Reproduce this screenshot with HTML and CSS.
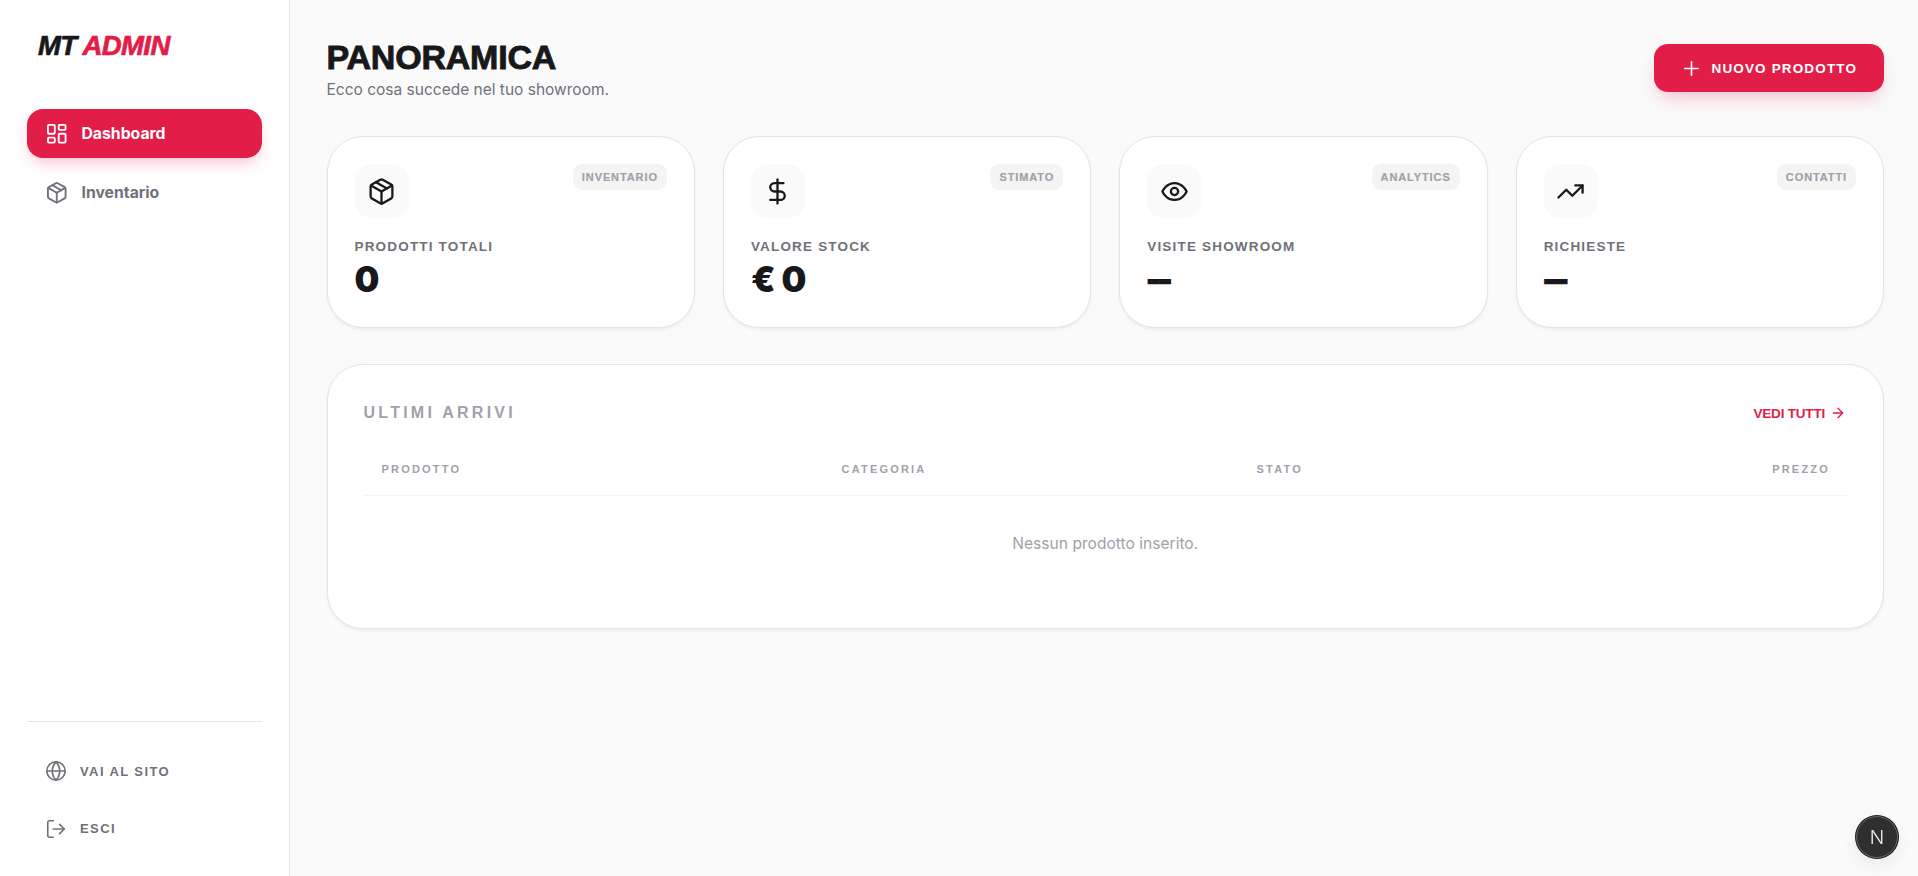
FILE: index.html
```html
<!DOCTYPE html>
<html lang="it">
<head>
<meta charset="utf-8">
<title>MT Admin</title>
<link rel="stylesheet" href="styles.css">
</head>
<body>
<aside class="sidebar">
  <div class="logo"><span class="logo-dark">MT</span> <span class="logo-red">ADMIN</span></div>
  <nav class="nav">
    <a class="nav-item active"><svg class="ic ic-nav" viewBox="0 0 24 24"><rect x="3" y="3" width="7" height="9" rx="1"/><rect x="14" y="3" width="7" height="5" rx="1"/><rect x="14" y="12" width="7" height="9" rx="1"/><rect x="3" y="16" width="7" height="5" rx="1"/></svg>Dashboard</a>
    <a class="nav-item"><svg class="ic ic-nav" viewBox="0 0 24 24"><path d="m7.5 4.27 9 5.15"/><path d="M21 8a2 2 0 0 0-1-1.73l-7-4a2 2 0 0 0-2 0l-7 4A2 2 0 0 0 3 8v8a2 2 0 0 0 1 1.73l7 4a2 2 0 0 0 2 0l7-4A2 2 0 0 0 21 16Z"/><path d="m3.3 7 8.7 5 8.7-5"/><path d="M12 22V12"/></svg>Inventario</a>
  </nav>
  <div class="side-foot">
    <a class="foot-item"><svg class="ic ic-foot" viewBox="0 0 24 24"><circle cx="12" cy="12" r="10"/><path d="M12 2a14.5 14.5 0 0 0 0 20 14.5 14.5 0 0 0 0-20"/><path d="M2 12h20"/></svg>VAI AL SITO</a>
    <a class="foot-item"><svg class="ic ic-foot" viewBox="0 0 24 24"><path d="M9 21H5a2 2 0 0 1-2-2V5a2 2 0 0 1 2-2h4"/><polyline points="16 17 21 12 16 7"/><line x1="21" y1="12" x2="9" y2="12"/></svg>ESCI</a>
  </div>
</aside>
<main class="main">
  <header class="head">
    <div>
      <h1 class="title">PANORAMICA</h1>
      <p class="subtitle">Ecco cosa succede nel tuo showroom.</p>
    </div>
    <button class="new-btn"><svg class="ic ic-plus" viewBox="0 0 24 24"><path d="M5 12h14"/><path d="M12 5v14"/></svg>NUOVO PRODOTTO</button>
  </header>
  <section class="stats">
    <article class="card">
      <div class="card-top">
        <div class="icon-box"><svg class="ic ic-stat" viewBox="0 0 24 24"><path d="m7.5 4.27 9 5.15"/><path d="M21 8a2 2 0 0 0-1-1.73l-7-4a2 2 0 0 0-2 0l-7 4A2 2 0 0 0 3 8v8a2 2 0 0 0 1 1.73l7 4a2 2 0 0 0 2 0l7-4A2 2 0 0 0 21 16Z"/><path d="m3.3 7 8.7 5 8.7-5"/><path d="M12 22V12"/></svg></div>
        <span class="badge">INVENTARIO</span>
      </div>
      <div class="label">PRODOTTI TOTALI</div>
      <div class="value">0</div>
    </article>
    <article class="card">
      <div class="card-top">
        <div class="icon-box"><svg class="ic ic-stat" viewBox="0 0 24 24"><line x1="12" y1="2" x2="12" y2="22"/><path d="M17 5H9.5a3.5 3.5 0 0 0 0 7h5a3.5 3.5 0 0 1 0 7H6"/></svg></div>
        <span class="badge">STIMATO</span>
      </div>
      <div class="label">VALORE STOCK</div>
      <div class="value value-euro">€0</div>
    </article>
    <article class="card">
      <div class="card-top">
        <div class="icon-box"><svg class="ic ic-stat" viewBox="0 0 24 24"><path d="M2 12s3-7 10-7 10 7 10 7-3 7-10 7-10-7-10-7Z"/><circle cx="12" cy="12" r="3"/></svg></div>
        <span class="badge">ANALYTICS</span>
      </div>
      <div class="label">VISITE SHOWROOM</div>
      <div class="value value-dash">--</div>
    </article>
    <article class="card">
      <div class="card-top">
        <div class="icon-box"><svg class="ic ic-stat" viewBox="0 0 24 24"><polyline points="22 7 13.5 15.5 8.5 10.5 2 17"/><polyline points="16 7 22 7 22 13"/></svg></div>
        <span class="badge">CONTATTI</span>
      </div>
      <div class="label">RICHIESTE</div>
      <div class="value value-dash">--</div>
    </article>
  </section>
  <section class="panel">
    <div class="panel-head">
      <h2 class="panel-title">ULTIMI ARRIVI</h2>
      <a class="see-all">VEDI TUTTI<svg class="ic ic-arrow" viewBox="0 0 24 24"><path d="M5 12h14"/><path d="m12 5 7 7-7 7"/></svg></a>
    </div>
    <div class="thead">
      <span>PRODOTTO</span>
      <span>CATEGORIA</span>
      <span>STATO</span>
      <span class="right">PREZZO</span>
    </div>
    <p class="empty">Nessun prodotto inserito.</p>
  </section>
</main>
<div class="next-badge"><span>N</span></div>
</body>
</html>
```
FILE: styles.css
```css
* { box-sizing: border-box; }
html, body { margin: 0; height: 100%; }
body {
  display: flex;
  height: 876px;
  overflow: hidden;
  background: #fafafa;
  font-family: "Liberation Sans", Arial, sans-serif;
  color: #18181b;
}
.ic {
  fill: none;
  stroke: currentColor;
  stroke-width: 2;
  stroke-linecap: round;
  stroke-linejoin: round;
  flex: none;
}

.sidebar {
  width: 290px;
  flex: none;
  background: #fff;
  border-right: 1px solid #e4e4e7;
  padding: 0 27px;
  display: flex;
  flex-direction: column;
}
.logo {
  margin: 30px 0 0 11px;
  height: 32px;
  line-height: 32px;
  font-size: 27.5px;
  font-weight: 700;
  font-style: italic;
  letter-spacing: -0.6px;
  -webkit-text-stroke: 0.7px currentColor;
  white-space: nowrap;
}
.logo-dark { color: #18181b; }
.logo-red { color: #e11d48; }
.nav {
  margin-top: 47px;
  display: flex;
  flex-direction: column;
  gap: 10px;
}
.nav-item {
  height: 49px;
  display: flex;
  align-items: center;
  gap: 13px;
  padding-left: 18px;
  border-radius: 16px;
  font-family: Inter, "Liberation Sans", sans-serif;
  font-size: 15.75px;
  font-weight: 700;
  color: #71717a;
}
.nav-item.active {
  background: #e11d48;
  color: #fff;
  box-shadow: 0 8px 16px -4px rgba(225, 29, 72, 0.28);
}
.ic-nav { width: 23.5px; height: 23.5px; stroke-width: 1.9; }
.side-foot {
  margin-top: auto;
  margin-bottom: 24px;
  border-top: 1px solid #e4e4e7;
  padding-top: 26px;
  display: flex;
  flex-direction: column;
  gap: 10.5px;
}
.foot-item {
  height: 47px;
  display: flex;
  align-items: center;
  gap: 13px;
  padding-left: 18px;
  font-size: 13px;
  font-weight: 700;
  letter-spacing: 1.4px;
  color: #71717a;
}
.ic-foot { width: 22px; height: 22px; stroke-width: 1.8; }

.main {
  flex: 1;
  min-width: 0;
  padding: 36px 34px 0 36.5px;
}
.head {
  display: flex;
  justify-content: space-between;
  align-items: flex-start;
  height: 100px;
}
.title {
  margin: 2px 0 0;
  font-size: 34px;
  line-height: 38px;
  font-weight: 700;
  letter-spacing: -0.2px;
  -webkit-text-stroke: 0.9px currentColor;
  color: #18181b;
}
.subtitle {
  margin: 4px 0 0;
  font-family: Inter, "Liberation Sans", sans-serif;
  font-size: 15.5px;
  line-height: 19px;
  color: #71717a;
}
.new-btn {
  margin-top: 8px;
  width: 230px;
  height: 48px;
  border: 0;
  border-radius: 14px;
  background: #e11d48;
  color: #fff;
  font-family: inherit;
  font-size: 13.5px;
  font-weight: 700;
  letter-spacing: 1.15px;
  display: flex;
  align-items: center;
  justify-content: flex-start;
  gap: 8.5px;
  padding: 0 0 0 26px;
  box-shadow: 0 10px 18px -5px rgba(225, 29, 72, 0.28);
}
.ic-plus { width: 23px; height: 23px; stroke-width: 1.7; }

.stats {
  display: grid;
  grid-template-columns: repeat(4, 1fr);
  gap: 28px;
}
.card {
  height: 192px;
  background: #fff;
  border: 1px solid #e4e4e7;
  border-radius: 36px;
  padding: 27px 27px 0;
  box-shadow: 0 2px 3px rgba(0, 0, 0, 0.05);
}
.card-top {
  display: flex;
  justify-content: space-between;
  align-items: flex-start;
}
.icon-box {
  width: 54px;
  height: 54px;
  border-radius: 16px;
  background: #fafafa;
  display: flex;
  align-items: center;
  justify-content: center;
}
.ic-stat { width: 29px; height: 29px; stroke-width: 1.9; color: #18181b; }
.badge {
  height: 26px;
  line-height: 26px;
  padding: 0 9px;
  border-radius: 9px;
  background: #f4f4f5;
  color: #a1a1aa;
  font-size: 11px;
  font-weight: 700;
  letter-spacing: 0.9px;
  -webkit-text-stroke: 0.2px currentColor;
}
.label {
  margin-top: 20px;
  font-size: 13.5px;
  line-height: 18px;
  font-weight: 700;
  letter-spacing: 1.18px;
  color: #71717a;
}
.value {
  margin-top: 3px;
  font-family: Inter, "Liberation Sans", sans-serif;
  font-size: 35px;
  line-height: 40px;
  font-weight: 900;
  color: #18181b;
}
.value-euro { letter-spacing: 6px; }
.value-dash { letter-spacing: -5px; text-indent: -2px; }

.panel {
  margin-top: 36px;
  height: 265px;
  background: #fff;
  border: 1px solid #e4e4e7;
  border-radius: 36px;
  padding: 37px 36px 0;
  box-shadow: 0 2px 3px rgba(0, 0, 0, 0.05);
}
.panel-head {
  display: flex;
  justify-content: space-between;
  align-items: center;
  height: 22px;
}
.panel-title {
  margin: 0;
  font-size: 16px;
  font-weight: 700;
  letter-spacing: 3.25px;
  color: #a1a1aa;
}
.see-all {
  display: flex;
  align-items: center;
  gap: 5px;
  margin-right: 1px;
  font-size: 13.5px;
  font-weight: 700;
  letter-spacing: -0.2px;
  color: #e11d48;
}
.ic-arrow { width: 16px; height: 16px; }
.thead {
  margin-top: 39px;
  height: 33px;
  display: grid;
  grid-template-columns: 460px 415px 1fr 150px;
  padding: 0 17px 0 18px;
  border-bottom: 1px solid #f4f4f5;
  font-size: 11px;
  line-height: 13px;
  font-weight: 700;
  letter-spacing: 2.2px;
  color: #a1a1aa;
}
.right { text-align: right; }
.empty {
  margin: 38px 0 0;
  text-align: center;
  font-family: Inter, "Liberation Sans", sans-serif;
  font-size: 15.6px;
  line-height: 19px;
  color: #a1a1aa;
}

.next-badge {
  position: fixed;
  left: 1856px;
  top: 816px;
  width: 42px;
  height: 42px;
  border-radius: 50%;
  background: #2f2f2f;
  border: 1px solid #666;
  box-shadow: 0 0 0 1px #1a1a1a, 0 6px 16px rgba(0, 0, 0, 0.08);
  color: #eee;
  display: flex;
  align-items: center;
  justify-content: center;
  font-family: Inter, "Liberation Sans", sans-serif;
  font-size: 19px;
  font-weight: 300;
}
```
